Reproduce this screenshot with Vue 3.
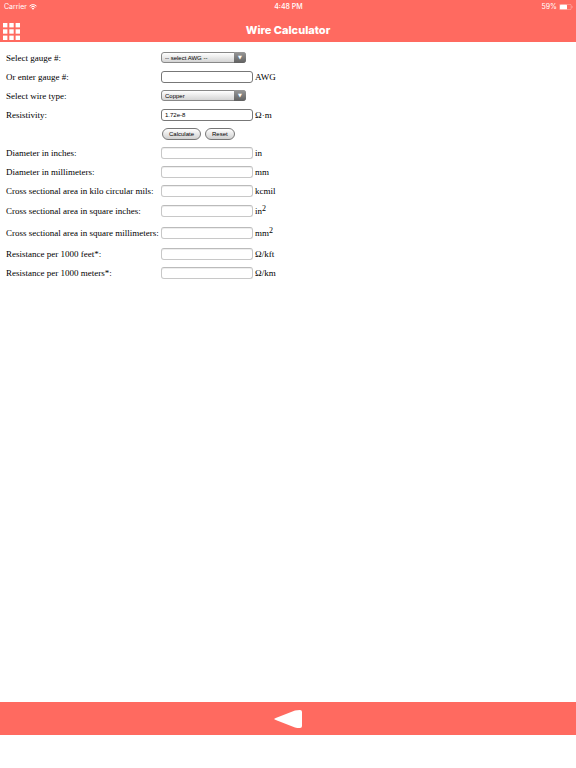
<template>
  <div class="page">
    <header class="top">
      <div class="status">
        <div class="carrier">
          <span>Carrier</span>
          <svg class="wifi" viewBox="0 0 16 12" aria-hidden="true">
            <path d="M1 4.2a10 10 0 0 1 14 0M3.4 6.8a6.6 6.6 0 0 1 9.2 0" fill="none" stroke="#fff" stroke-width="2" />
            <path d="M5.4 8.8a3.8 3.8 0 0 1 5.2 0L8 11.6z" fill="#fff" />
          </svg>
        </div>
        <div class="time">4:48 PM</div>
        <div class="battery">
          <span>59%</span>
          <svg class="battery-icon" viewBox="0 0 28 12" aria-hidden="true">
            <rect x="0.7" y="0.7" width="23.6" height="10.6" rx="2.4" fill="none" stroke="#fff" stroke-opacity="0.5" stroke-width="1.2" />
            <rect x="2" y="1.5" width="14" height="9" rx="1" fill="#fff" />
            <path d="M25.8 4v4c1.8-.6 1.8-3.4 0-4z" fill="#fff" fill-opacity="0.6" />
          </svg>
        </div>
      </div>
      <div class="titlebar">
        <button type="button" class="menu" aria-label="Menu">
          <svg viewBox="0 0 17 17" aria-hidden="true">
            <rect v-for="n in 9" :key="n" :x="((n - 1) % 3) * 6.3" :y="Math.floor((n - 1) / 3) * 6.3" width="4.4" height="4.4" fill="#fff" />
          </svg>
        </button>
        <h1>Wire Calculator</h1>
      </div>
    </header>

    <main>
      <form @submit.prevent="calculate" @reset.prevent="reset">
        <div class="row">
          <label for="gauge-select">Select gauge #:</label>
          <span class="select">
            <select id="gauge-select" v-model="selected" @change="gauge = selected">
              <option value="">-- select AWG --</option>
              <option v-for="g in gauges" :key="g" :value="g">{{ g }}</option>
            </select>
          </span>
        </div>
        <div class="row">
          <label for="gauge">Or enter gauge #:</label>
          <input id="gauge" v-model="gauge" type="text">
          <span>AWG</span>
        </div>
        <div class="row">
          <label for="wire">Select wire type:</label>
          <span class="select">
            <select id="wire" v-model="wire" @change="resistivity = wire">
              <option v-for="w in wires" :key="w.name" :value="w.value">{{ w.name }}</option>
            </select>
          </span>
        </div>
        <div class="row">
          <label for="resistivity">Resistivity:</label>
          <input id="resistivity" v-model="resistivity" type="text">
          <span>Ω·m</span>
        </div>
        <div class="row">
          <div class="buttons">
            <button type="submit">Calculate</button>
            <button type="reset">Reset</button>
          </div>
        </div>
        <div v-for="r in results" :key="r.id" class="row" :class="{ tall: r.sup }">
          <label :for="r.id">{{ r.label }}</label>
          <input :id="r.id" v-model="values[r.id]" class="result" type="text" readonly>
          <span>{{ r.unit }}<sup v-if="r.sup">{{ r.sup }}</sup></span>
        </div>
      </form>
    </main>

    <footer>
      <button type="button" class="back" aria-label="Back">
        <svg viewBox="0 0 28 18" aria-hidden="true">
          <path d="M0 9Q1 8.300 3 7.500L21 .6Q23 0 26 0Q28 0 28 2V16Q28 18 26 18Q23 18 21 17.400L3 10.500Q1 9.700 0 9z" fill="#fff" />
        </svg>
      </button>
    </footer>
  </div>
</template>

<script setup>
import { ref, reactive } from 'vue'

const gauges = ['0000', '000', '00', ...Array.from({ length: 41 }, (_, i) => String(i))]

const wires = [
  { name: 'Copper', value: '1.72e-8' },
  { name: 'Aluminum', value: '2.82e-8' },
  { name: 'Silver', value: '1.59e-8' },
  { name: 'Gold', value: '2.44e-8' },
  { name: 'Iron', value: '1.0e-7' }
]

const results = [
  { id: 'inches', label: 'Diameter in inches:', unit: 'in' },
  { id: 'mm', label: 'Diameter in millimeters:', unit: 'mm' },
  { id: 'kcmil', label: 'Cross sectional area in kilo circular mils:', unit: 'kcmil' },
  { id: 'sqin', label: 'Cross sectional area in square inches:', unit: 'in', sup: '2' },
  { id: 'sqmm', label: 'Cross sectional area in square millimeters:', unit: 'mm', sup: '2' },
  { id: 'kft', label: 'Resistance per 1000 feet*:', unit: 'Ω/kft' },
  { id: 'km', label: 'Resistance per 1000 meters*:', unit: 'Ω/km' }
]

const selected = ref('')
const gauge = ref('')
const wire = ref('1.72e-8')
const resistivity = ref('1.72e-8')
const values = reactive({})

const calculate = () => {
  const text = String(gauge.value).trim()
  // 00, 000 and 0000 count downwards from 0
  const n = /^0+$/.test(text) ? 1 - text.length : parseFloat(text)
  const rho = parseFloat(resistivity.value)
  if (isNaN(n) || isNaN(rho)) return

  const inches = 0.005 * Math.pow(92, (36 - n) / 39)
  const mm = inches * 25.4
  const sqmm = Math.PI * mm * mm / 4
  const km = rho * 1e9 / sqmm

  values.inches = inches.toPrecision(5)
  values.mm = mm.toPrecision(5)
  values.kcmil = (inches * inches * 1000).toPrecision(5)
  values.sqin = (Math.PI * inches * inches / 4).toPrecision(5)
  values.sqmm = sqmm.toPrecision(5)
  values.kft = (km * 0.3048).toPrecision(5)
  values.km = km.toPrecision(5)
}

const reset = () => {
  selected.value = ''
  gauge.value = ''
  wire.value = '1.72e-8'
  resistivity.value = '1.72e-8'
  results.forEach(r => { values[r.id] = '' })
}
</script>

<style>
body {
  margin: 0;
  background: #fff;
}
</style>

<style scoped>
.page {
  display: flex;
  flex-direction: column;
  box-sizing: border-box;
  min-height: 100vh;
  padding-bottom: 33px;
}

.top {
  background: #ff6a60;
  color: #fff;
  font-family: Inter, "Liberation Sans", sans-serif;
}

.status {
  display: grid;
  grid-template-columns: 1fr auto 1fr;
  align-items: center;
  height: 13px;
  padding: 0 3px 0 4px;
  font-size: 7px;
  line-height: 13px;
}

.time {
  font-weight: 500;
}

.carrier,
.battery {
  display: flex;
  align-items: center;
  gap: 2px;
}

.battery {
  justify-content: flex-end;
}

.wifi {
  width: 8px;
  height: 6px;
}

.battery-icon {
  width: 14px;
  height: 6px;
}

.titlebar {
  display: grid;
  grid-template-columns: 1fr auto 1fr;
  align-items: center;
  height: 29px;
  padding: 7px 3px 0;
  box-sizing: border-box;
}

h1 {
  margin: 0;
  padding-bottom: 3px;
  font-size: 11px;
  line-height: 14px;
  font-weight: 800;
}

.menu,
.back {
  display: block;
  padding: 0;
  border: 0;
  background: none;
  cursor: pointer;
}

.menu {
  width: 17px;
  height: 17px;
}

.menu svg,
.back svg {
  display: block;
  width: 100%;
  height: 100%;
}

main {
  flex: 1;
  padding: 6px;
  color: #000;
  font-family: "Liberation Serif", "Times New Roman", serif;
  font-size: 9px;
  line-height: 12px;
}

.row {
  display: grid;
  grid-template-columns: 155px 92px auto;
  align-items: center;
  height: 19px;
}

.row > label {
  white-space: nowrap;
}

.row > input + span {
  padding-left: 2px;
}

.row.tall {
  height: 22px;
}

sup {
  font-size: 8px;
  line-height: 0;
  vertical-align: 3px;
}

input,
select,
.buttons button {
  box-sizing: border-box;
  margin: 0;
  color: #000;
  font-family: "Liberation Sans", Arial, sans-serif;
  font-size: 6px;
}

input {
  width: 100%;
  height: 12px;
  padding: 0 3px;
  border: 1px solid #777;
  border-radius: 3px;
  background: #fff;
}

.result {
  border-color: #bbb #c8c8c8 #c8c8c8;
  box-shadow: inset 0 1px 0 #eee;
}

.select {
  position: relative;
  width: 85px;
  height: 11px;
}

.select select {
  display: block;
  width: 100%;
  height: 100%;
  padding: 0 14px 0 3px;
  appearance: none;
  border: 1px solid #888;
  border-radius: 3px;
  background: linear-gradient(#fff, #d4d4d4);
}

.select::after {
  content: "▼";
  position: absolute;
  top: 0;
  right: 0;
  width: 12px;
  height: 11px;
  border-radius: 0 3px 3px 0;
  background: linear-gradient(#999, #606060);
  color: #fff;
  font-family: "DejaVu Sans", sans-serif;
  font-size: 5px;
  line-height: 11px;
  text-align: center;
  pointer-events: none;
}

.buttons {
  display: flex;
  grid-column: 2 / 4;
  gap: 4px;
  padding-left: 1px;
}

.buttons button {
  height: 12px;
  padding: 0 6px;
  border: 1px solid #777;
  border-radius: 6px;
  background: linear-gradient(#fff, #d0d0d0);
  line-height: 10px;
}

footer {
  display: flex;
  align-items: center;
  justify-content: center;
  height: 33px;
  background: #ff6a60;
}

.back {
  width: 28px;
  height: 18px;
}
</style>
